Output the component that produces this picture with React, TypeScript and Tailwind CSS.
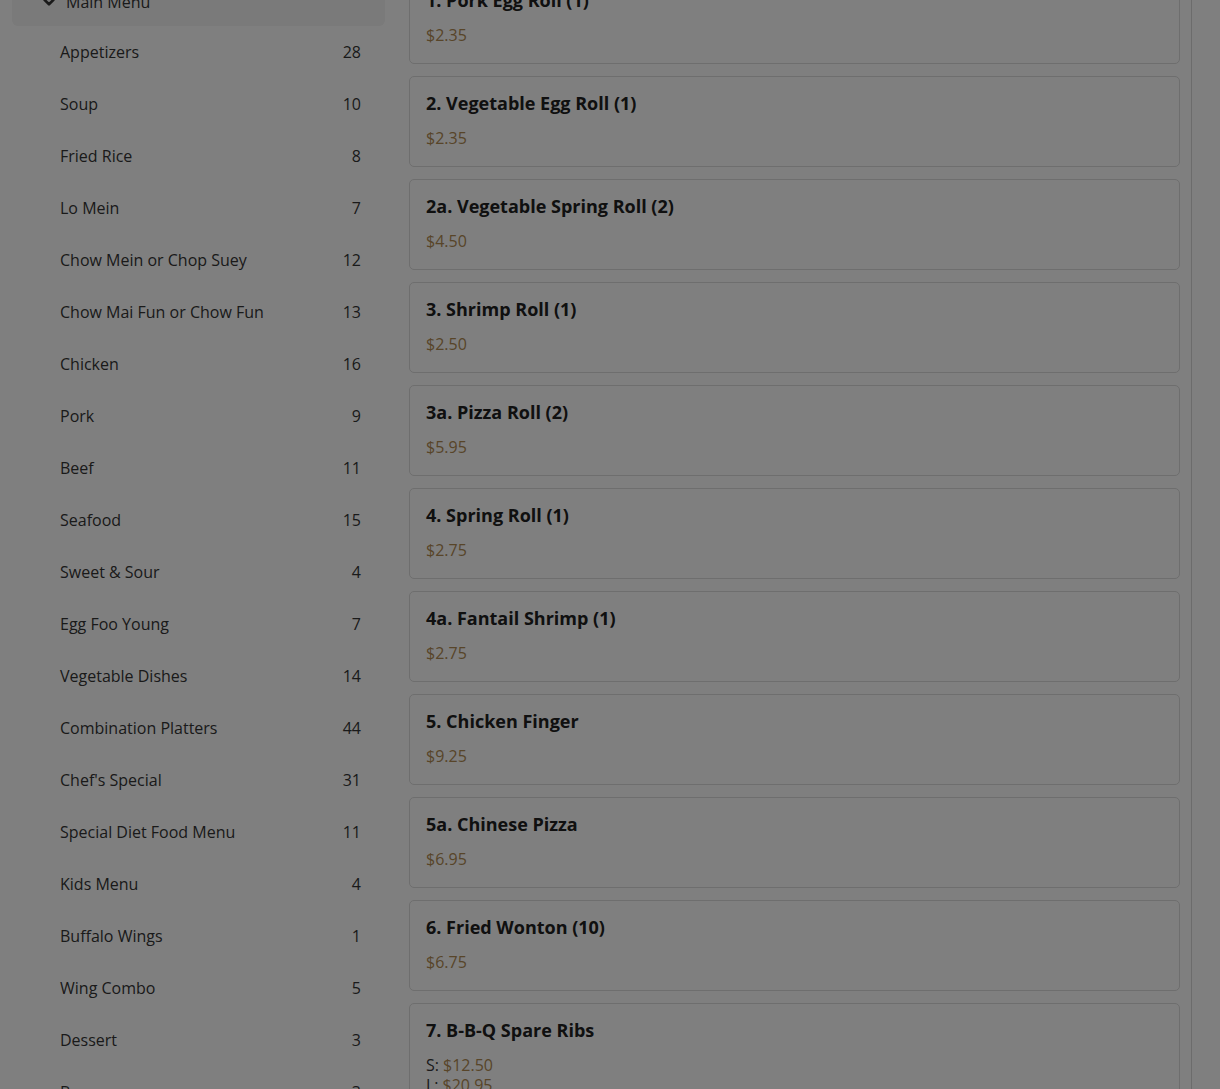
import { ChevronDown } from 'lucide-react';

type Price = { label?: string; value: string };
type Item = { name: string; prices: Price[] };

const categories: [string, number][] = [
    ['Appetizers', 28],
    ['Soup', 10],
    ['Fried Rice', 8],
    ['Lo Mein', 7],
    ['Chow Mein or Chop Suey', 12],
    ['Chow Mai Fun or Chow Fun', 13],
    ['Chicken', 16],
    ['Pork', 9],
    ['Beef', 11],
    ['Seafood', 15],
    ['Sweet & Sour', 4],
    ['Egg Foo Young', 7],
    ['Vegetable Dishes', 14],
    ['Combination Platters', 44],
    ["Chef's Special", 31],
    ['Special Diet Food Menu', 11],
    ['Kids Menu', 4],
    ['Buffalo Wings', 1],
    ['Wing Combo', 5],
    ['Dessert', 3],
    ['Beverages', 3],
];

const items: Item[] = [
    { name: '1. Pork Egg Roll (1)', prices: [{ value: '$2.35' }] },
    { name: '2. Vegetable Egg Roll (1)', prices: [{ value: '$2.35' }] },
    { name: '2a. Vegetable Spring Roll (2)', prices: [{ value: '$4.50' }] },
    { name: '3. Shrimp Roll (1)', prices: [{ value: '$2.50' }] },
    { name: '3a. Pizza Roll (2)', prices: [{ value: '$5.95' }] },
    { name: '4. Spring Roll (1)', prices: [{ value: '$2.75' }] },
    { name: '4a. Fantail Shrimp (1)', prices: [{ value: '$2.75' }] },
    { name: '5. Chicken Finger', prices: [{ value: '$9.25' }] },
    { name: '5a. Chinese Pizza', prices: [{ value: '$6.95' }] },
    { name: '6. Fried Wonton (10)', prices: [{ value: '$6.75' }] },
    { name: '7. B-B-Q Spare Ribs', prices: [{ label: 'S:', value: '$12.50' }, { label: 'L:', value: '$20.95' }] },
];

export default function App() {
    return (
        <div className="relative h-[1089px] overflow-hidden bg-white text-[#353535] font-['Open_Sans',sans-serif]">
            <div className="flex items-start pl-3">
                {/* Sidebar */}
                <aside className="w-[373px] shrink-0 -mt-[23px]">
                    <div className="h-[49px] flex items-center gap-2 pl-[28px] bg-[#f4f4f4] rounded-b-md">
                        <ChevronDown className="w-[18px] h-[18px]" strokeWidth={3.5} />
                        <span className="text-base">Main Menu</span>
                    </div>
                    <ul>
                        {categories.map(([name, count]) => (
                            <li key={name} className="flex items-center justify-between pl-12 pr-6 py-[14px] text-base leading-6">
                                <span>{name}</span>
                                <span>{count}</span>
                            </li>
                        ))}
                    </ul>
                </aside>

                {/* Item list */}
                <main className="ml-6 w-[783px] shrink-0 pr-3 border-r border-[#d8d8d8] -mt-[27px] flex flex-col gap-3">
                    {items.map((item) => {
                        const multi = item.prices.length > 1;
                        return (
                            <div key={item.name} className="w-[771px] border border-[#dcdcdc] rounded-[5px] px-4 pt-[14px] pb-4">
                                <div className="text-lg font-bold leading-6 text-[#202020]">{item.name}</div>
                                <div className={multi ? 'mt-[13px]' : 'mt-[11px]'}>
                                    {item.prices.map((p, i) => (
                                        <div key={i} className={multi ? 'text-base leading-5' : 'text-base leading-6'}>
                                            {p.label && <span className="mr-1">{p.label}</span>}
                                            <span className="text-[#b08a52]">{p.value}</span>
                                        </div>
                                    ))}
                                </div>
                            </div>
                        );
                    })}
                </main>
            </div>

            {/* Modal backdrop */}
            <div className="absolute inset-0 bg-black/50" />
        </div>
    );
}
